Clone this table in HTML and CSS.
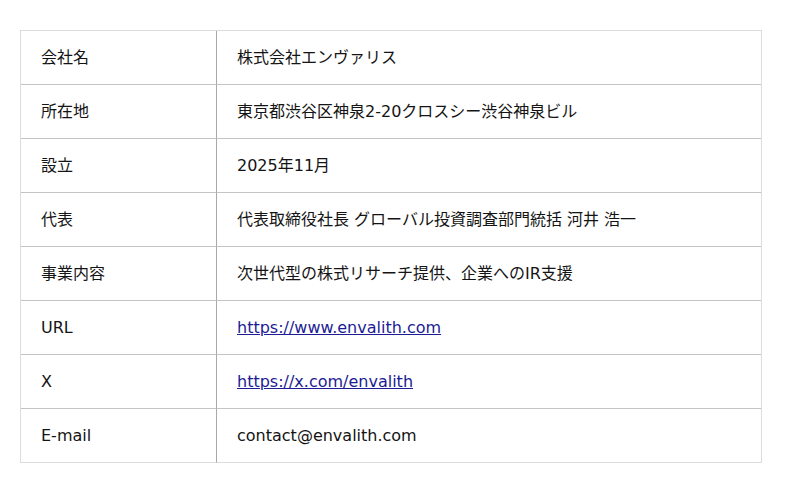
FILE: index.html
```html
<!DOCTYPE html>
<html lang="ja">
<head>
<meta charset="utf-8">
<link rel="stylesheet" href="styles.css">
</head>
<body>
<table class="info">
  <tbody>
    <tr><th>会社名</th><td>株式会社エンヴァリス</td></tr>
    <tr><th>所在地</th><td>東京都渋谷区神泉2-20クロスシー渋谷神泉ビル</td></tr>
    <tr><th>設立</th><td>2025年11月</td></tr>
    <tr><th>代表</th><td>代表取締役社長 グローバル投資調査部門統括 河井 浩一</td></tr>
    <tr><th>事業内容</th><td>次世代型の株式リサーチ提供、企業へのIR支援</td></tr>
    <tr><th>URL</th><td><a class="link" href="#">https://www.envalith.com</a></td></tr>
    <tr><th>X</th><td><a class="link" href="#">https://x.com/envalith</a></td></tr>
    <tr class="last"><th>E-mail</th><td>contact@envalith.com</td></tr>
  </tbody>
</table>
</body>
</html>
```

FILE: styles.css
```css
html, body {
  margin: 0;
  background: #fff;
}
body {
  padding: 30px 20px;
  font-family: "DejaVu Sans", "Noto Sans CJK JP", sans-serif;
  font-size: 16px;
  line-height: 20px;
  color: #141414;
}
.info {
  width: 742px;
  border-collapse: separate;
  border-spacing: 0;
  border-top: 1px solid #dcdcdc;
  border-left: 1px solid #dcdcdc;
  border-right: 1px solid #dcdcdc;
}
.info th, .info td {
  height: 54px;
  padding: 0 20px;
  text-align: left;
  font-weight: normal;
  vertical-align: middle;
  border-bottom: 1px solid #c4c4c4;
  box-sizing: border-box;
}
.info tr.last th, .info tr.last td {
  border-bottom-color: #dcdcdc;
}
.info th {
  width: 196px;
  border-right: 1px solid #a8a8a8;
}
.link {
  color: #1c1c94;
  text-decoration: underline;
}
```
